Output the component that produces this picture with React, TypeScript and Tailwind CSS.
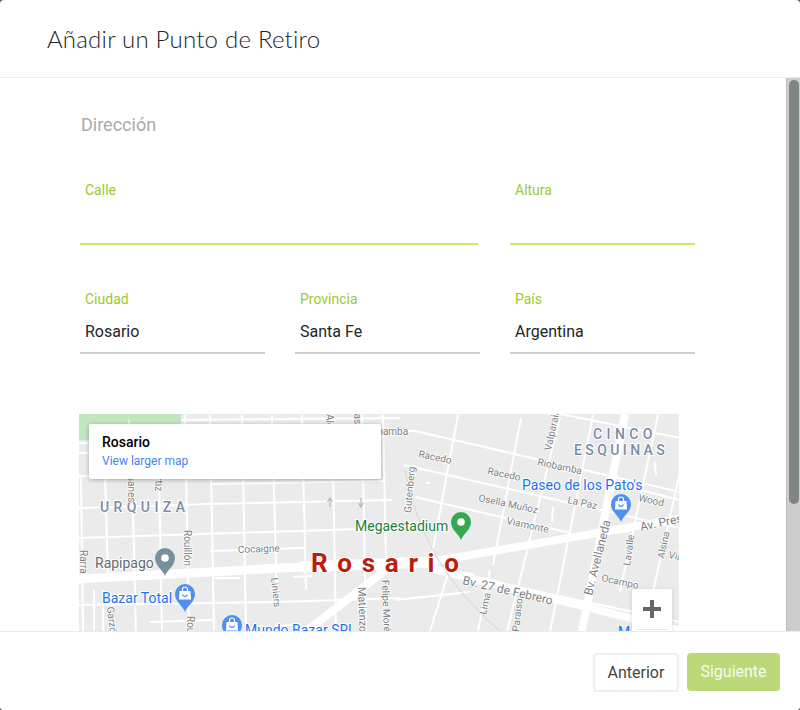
import React from "react";

type L = [number, number, number, number, number?];

// Thin streets, in page coordinates (the map's viewBox starts at 79,414)
const streets: L[] = [
  // left area: horizontals
  [181, 420, 400, 418], [79, 443, 90, 443], [79, 453, 90, 453], [79, 476, 210, 474], [210, 484, 385, 481],
  [79, 508, 210, 504], [210, 504, 392, 500], [79, 538, 392, 528], [210, 551, 305, 548],
  [79, 605, 277, 602], [150, 622, 215, 620], [277, 602, 400, 598], [275, 626, 300, 624],
  [215, 578, 240, 578], [293, 577, 312, 576],
  // left area: verticals
  [81, 475, 83, 631], [105, 475, 108, 575], [132, 475, 136, 631], [159, 475, 162, 631],
  [185, 415, 189, 631], [210, 415, 214, 631], [242, 415, 246, 631], [272, 415, 277, 600],
  [302, 415, 306, 590], [332, 415, 336, 631], [362, 415, 366, 631], [383, 415, 386, 565],
  [94, 590, 94, 631], [103, 590, 103, 631],
  // right area: verticals (tilted)
  [458, 415, 430, 565], [521, 418, 493, 565], [560, 417, 507, 632], [593, 415, 550, 632],
  [658, 415, 620, 592], [680, 472, 650, 605], [490, 570, 478, 631], [448, 574, 430, 631],
  // right area: horizontals (tilted)
  [380, 430, 415, 431], [415, 431, 680, 492], [404, 465, 680, 528], [415, 497, 570, 533],
  [560, 414, 680, 438], [470, 577, 680, 622], [395, 600, 470, 592], [640, 490, 680, 500],
  [455, 572, 474, 574], [655, 462, 656, 475], [553, 507, 552, 522], [426, 483, 430, 483],
];

// Wide avenues
const avenues: L[] = [
  [79, 579, 300, 567, 9], [300, 567, 430, 562, 11], [430, 562, 690, 517, 8],
  [430, 568, 690, 633, 8], [295, 640, 392, 565, 8], [625, 414, 580, 640, 8],
];

function Pin({ x, y, color, bag }: { x: number; y: number; color: string; bag?: boolean }) {
  // x,y = the centre of the head of the pin
  return (
    <g transform={`translate(${x} ${y})`}>
      <path d="M0 18 C-2 12 -10 8 -10 0 A10 10 0 1 1 10 0 C10 8 2 12 0 18 Z" fill={color} />
      {bag ? (
        <g>
          <path d="M-5.5 -3 H5.5 L6 5.5 H-6 Z" fill="#ffffff" />
          <path d="M-2.5 -3 V-4.5 A2.5 2.5 0 0 1 2.5 -4.5 V-3" fill="none" stroke="#ffffff" strokeWidth="1.2" />
          <path d="M-2.5 0.5 A2.6 2.6 0 0 0 2.5 0.5" fill="none" stroke={color} strokeWidth="1.1" />
        </g>
      ) : (
        <circle r="3.8" fill="#ffffff" />
      )}
    </g>
  );
}

function Street({ x, y, r, children, size = 10 }: { x: number; y: number; r: number; children: string; size?: number }) {
  return (
    <text
      x={x}
      y={y}
      transform={`rotate(${r} ${x} ${y})`}
      fontSize={size}
      fill="#7a7f84"
      stroke="#ffffff"
      strokeWidth="1.5"
      paintOrder="stroke"
    >
      {children}
    </text>
  );
}

function MapLabel({ x, y, fill, children, size = 14 }: { x: number; y: number; fill: string; children: string; size?: number }) {
  return (
    <text x={x} y={y} fontSize={size} fill={fill} stroke="#ffffff" strokeWidth="2" paintOrder="stroke">
      {children}
    </text>
  );
}

function MapDrawing() {
  return (
    <svg
      viewBox="79 414 600 217"
      width="600"
      height="217"
      className="block"
      style={{ fontFamily: "Roboto, sans-serif" }}
    >
      <rect x="79" y="414" width="600" height="217" fill="#ebebeb" />
      <rect x="79" y="414" width="102" height="26" fill="#c0e6bd" />
      <line x1="129" y1="420" x2="129" y2="426" stroke="#ffffff" strokeWidth="1" />
      <g stroke="#ffffff" strokeWidth="2" fill="none">
        {streets.map(([a, b, c, d], i) => (
          <line key={i} x1={a} y1={b} x2={c} y2={d} />
        ))}
      </g>
      <g stroke="#ffffff" fill="none">
        {avenues.map(([a, b, c, d, w], i) => (
          <line key={i} x1={a} y1={b} x2={c} y2={d} strokeWidth={w} />
        ))}
      </g>
      <path d="M405 470 C415 520 435 575 500 631" stroke="#d8dade" strokeWidth="1.2" fill="none" />
      <path d="M330 507 V499 M327.5 502 L330 498 L332.500 502" stroke="#b4b7ba" strokeWidth="1.2" fill="none" />
      <path d="M361 498 V506 M358.500 503 L361 507 L363.500 503" stroke="#b4b7ba" strokeWidth="1.2" fill="none" />

      <g fontWeight="500" fill="#7b8ba3" fontSize="14" letterSpacing="4.4" stroke="#ffffff" strokeWidth="2" paintOrder="stroke">
        <text x="100" y="512">URQUIZA</text>
        <text x="593" y="439">CINCO</text>
        <text x="574" y="455" letterSpacing="3.4">ESQUINAS</text>
      </g>

      <Street x={238} y={553} r={-2}>Cocaigne</Street>
      <Street x={184} y={530} r={90}>Rouillón</Street>
      <Street x={80} y={550} r={90}>Rarra</Street>
      <Street x={271} y={578} r={84}>Liniers</Street>
      <Street x={107} y={607} r={84}>Garzón</Street>
      <Street x={187} y={616} r={90}>Rouillón</Street>
      <Street x={358} y={587} r={88} size={11}>Matienzo</Street>
      <Street x={382} y={580} r={88}>Felipe Moré</Street>
      <Street x={128} y={470} r={90}>Juanes</Street>
      <Street x={155} y={470} r={90}>Ortiz</Street>
      <Street x={326} y={414} r={90}>Aldao</Street>
      <Street x={354} y={407} r={90}>Castellanos</Street>
      <Street x={363} y={435} r={0}>Riobamba</Street>
      <Street x={418} y={457} r={12}>Racedo</Street>
      <Street x={487} y={474} r={12}>Racedo</Street>
      <Street x={537} y={465} r={12}>Riobamba</Street>
      <Street x={551} y={451} r={-78}>Valparaiso</Street>
      <Street x={411} y={513} r={-85}>Gutenberg</Street>
      <Street x={478} y={501} r={12}>Osella Muñoz</Street>
      <Street x={506} y={524} r={12}>Viamonte</Street>
      <Street x={567} y={503} r={12}>La Paz</Street>
      <Street x={638} y={501} r={12}>Wood</Street>
      <Street x={592} y={596} r={-76} size={12}>Bv. Avellaneda</Street>
      <Street x={630} y={566} r={-82}>Lavalle</Street>
      <Street x={664} y={559} r={-78}>Alsina</Street>
      <Street x={668} y={558} r={12}>Viamonte</Street>
      <Street x={601} y={581} r={12}>Ocampo</Street>
      <Street x={641} y={531} r={-12} size={12}>Av. Presidente</Street>
      <Street x={462} y={584} r={13} size={12}>Bv. 27 de Febrero</Street>
      <Street x={486} y={615} r={-78}>Lima</Street>
      <Street x={519} y={632} r={-84}>Paraiso</Street>

      <MapLabel x={95} y={568} fill="#5f6b73">Rapipago</MapLabel>
      <Pin x={165} y={558} color="#78909c" />
      <MapLabel x={102} y={603} fill="#1a73e8">Bazar Total</MapLabel>
      <Pin x={185} y={594} color="#4f8ff0" bag />
      <MapLabel x={245} y={635} fill="#1a73e8">Mundo Bazar SRL</MapLabel>
      <Pin x={232} y={625} color="#4f8ff0" bag />
      <MapLabel x={355} y={531} fill="#188038">Megaestadium</MapLabel>
      <Pin x={461} y={522} color="#34a853" />
      <MapLabel x={522} y={490} fill="#1a73e8">Paseo de los Pato's</MapLabel>
      <Pin x={621} y={504} color="#4f8ff0" bag />
      <text x="618" y="637" fontSize="14" fill="#1a73e8">M</text>

      <text
        x="311"
        y="572"
        fontSize="26"
        fontWeight="700"
        fill="#bb1c10"
        letterSpacing="9.7"
        stroke="#ffffff"
        strokeWidth="2"
        paintOrder="stroke"
      >
        Rosario
      </text>
    </svg>
  );
}

function Field({ label, value, active, className }: { label: string; value?: string; active?: boolean; className: string }) {
  return (
    <div className={className}>
      <div className="h-[30px] pl-[5px] pt-[2px] text-[14px] leading-[20px] text-[#9cc92c]">{label}</div>
      <div
        className={`h-[37px] pl-[5px] pt-[3px] text-[16px] leading-[24px] text-[#212529] ${
          active
            ? "border-b-2 border-[#c6ec62]"
            : "border-b border-[#cfe488] shadow-[inset_0_-1px_0_#cdcdcd]"
        }`}
      >
        {value}
      </div>
    </div>
  );
}

export default function App() {
  return (
    <div className="h-[710px] w-[800px] bg-[#555555]">
      <div
        className="flex h-[710px] w-[800px] flex-col overflow-hidden rounded-[4px] bg-white"
        style={{ fontFamily: "Roboto, sans-serif" }}
      >
        <header className="flex h-[78px] shrink-0 items-center border-b border-[#e9ecef] pl-[47px]">
          <h1
            className="text-[24px] leading-[36px] font-light tracking-[0.22px] text-[#212529]"
            style={{ fontFamily: "Lato, sans-serif" }}
          >
            Añadir un Punto de Retiro
          </h1>
        </header>

        <div className="flex min-h-0 flex-1">
          <main className="min-w-0 flex-1 overflow-hidden pl-[80px] pr-[91px]">
            <h2 className="mt-[35px] pl-[1px] text-[18px] leading-[24px] text-[#aaaaaa]">Dirección</h2>
            <div className="mt-[41px] flex gap-[32px]">
              <Field label="Calle" active className="w-[398px]" />
              <Field label="Altura" active className="w-[185px]" />
            </div>
            <div className="mt-[42px] flex gap-[30px]">
              <Field label="Ciudad" value="Rosario" className="w-[185px]" />
              <Field label="Provincia" value="Santa Fe" className="w-[185px]" />
              <Field label="País" value="Argentina" className="w-[185px]" />
            </div>

            <div className="relative mt-[60px] h-[217px] w-[600px] -translate-x-px overflow-hidden">
              <MapDrawing />
              <div className="absolute left-[10px] top-[10px] h-[55px] w-[292px] rounded-[2px] bg-white px-[13px] pt-[10px] shadow-[0_1px_4px_rgba(0,0,0,0.3)]">
                <div className="text-[14px] leading-[16px] font-medium text-black">Rosario</div>
                <div className="mt-[3px] text-[12px] leading-[16px] text-[#4285f4]">View larger map</div>
              </div>
              <div className="absolute left-[553px] top-[175px] h-[60px] w-[40px] rounded-[2px] bg-white shadow-[0_1px_4px_rgba(0,0,0,0.15)]">
                <svg viewBox="0 0 40 40" width="40" height="40">
                  <path d="M20 11 V29 M11 20 H29" stroke="#666666" strokeWidth="4" fill="none" />
                </svg>
                <div className="mx-[5px] h-px bg-[#e6e6e6]" />
              </div>
            </div>
          </main>

          <aside className="w-[14px] shrink-0 border-l border-[#bdbdbd] bg-[#cdcdcd] pt-[2px] pl-[2px]">
            <div className="h-[424px] w-[10px] rounded-[5px] bg-[#7f8484]" />
          </aside>
        </div>

        <footer className="flex h-[79px] shrink-0 items-start justify-end gap-[8px] border-t border-[#e9ecef] bg-white pr-[20px] pt-[21px]">
          <button className="h-[39px] w-[86px] rounded-[4px] border-2 border-[#efefef] bg-white text-[16px] text-[#444444]">
            Anterior
          </button>
          <button className="h-[38px] w-[93px] rounded-[4px] bg-[#bcd878] text-[16px] text-[#f7faee]">
            Siguiente
          </button>
        </footer>
      </div>
    </div>
  );
}
